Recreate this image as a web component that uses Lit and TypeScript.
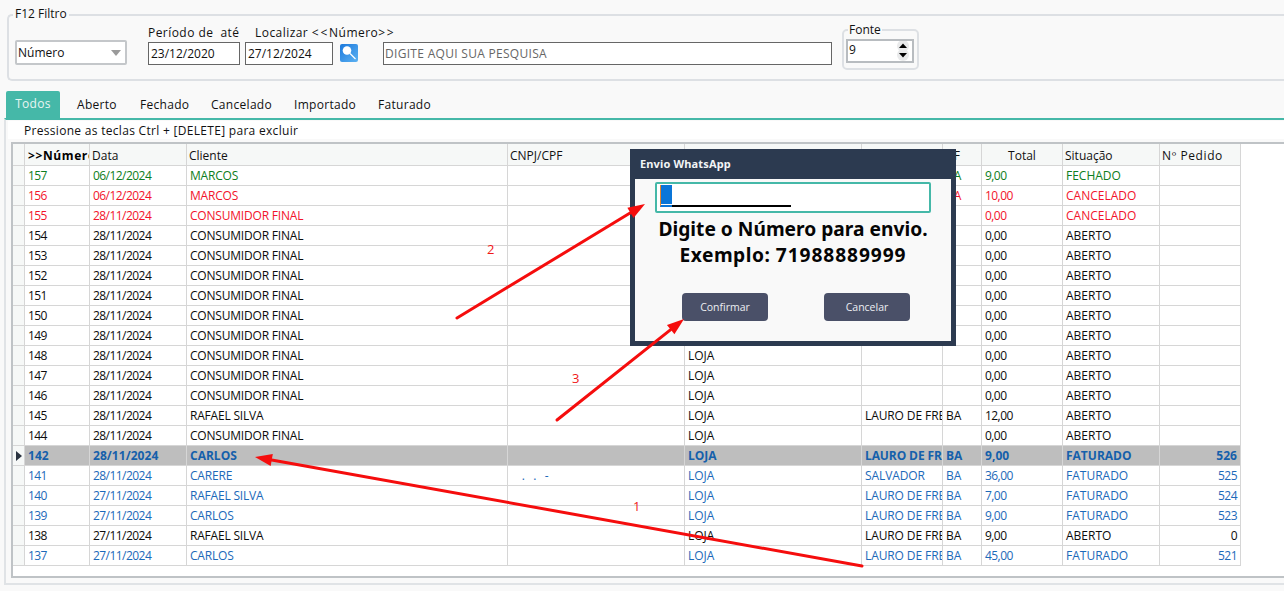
import { LitElement, html, css, svg } from "lit";
import { customElement } from "lit/decorators.js";

type Row = { n: string; d: string; c: string; doc?: string; city?: string; uf?: string; t: string; s: string; p?: string; k: string };

const L = "LAURO DE FREITAS";
const rows: Row[] = [
  { n: "157", d: "06/12/2024", c: "MARCOS", uf: "BA", t: "9,00", s: "FECHADO", k: "g" },
  { n: "156", d: "06/12/2024", c: "MARCOS", uf: "BA", t: "10,00", s: "CANCELADO", k: "r" },
  { n: "155", d: "28/11/2024", c: "CONSUMIDOR FINAL", t: "0,00", s: "CANCELADO", k: "r" },
  ...["154", "153", "152", "151", "150", "149", "148", "147", "146"].map((n) => ({
    n, d: "28/11/2024", c: "CONSUMIDOR FINAL", t: "0,00", s: "ABERTO", k: "k",
  })),
  { n: "145", d: "28/11/2024", c: "RAFAEL SILVA", city: L, uf: "BA", t: "12,00", s: "ABERTO", k: "k" },
  { n: "144", d: "28/11/2024", c: "CONSUMIDOR FINAL", t: "0,00", s: "ABERTO", k: "k" },
  { n: "142", d: "28/11/2024", c: "CARLOS", city: L, uf: "BA", t: "9,00", s: "FATURADO", p: "526", k: "sel" },
  { n: "141", d: "28/11/2024", c: "CARERE", doc: " .  .  -", city: "SALVADOR", uf: "BA", t: "36,00", s: "FATURADO", p: "525", k: "b" },
  { n: "140", d: "27/11/2024", c: "RAFAEL SILVA", city: L, uf: "BA", t: "7,00", s: "FATURADO", p: "524", k: "b" },
  { n: "139", d: "27/11/2024", c: "CARLOS", city: L, uf: "BA", t: "9,00", s: "FATURADO", p: "523", k: "b" },
  { n: "138", d: "27/11/2024", c: "RAFAEL SILVA", city: L, uf: "BA", t: "9,00", s: "ABERTO", p: "0", k: "k" },
  { n: "137", d: "27/11/2024", c: "CARLOS", city: L, uf: "BA", t: "45,00", s: "FATURADO", p: "521", k: "b" },
];

function arrow(x1: number, y1: number, x2: number, y2: number) {
  const a = Math.atan2(y2 - y1, x2 - x1);
  const len = 17, w = 6;
  const bx = x2 - Math.cos(a) * len, by = y2 - Math.sin(a) * len;
  const px = -Math.sin(a) * w, py = Math.cos(a) * w;
  return svg`<line x1=${x1} y1=${y1} x2=${bx} y2=${by} stroke="#f50d0d" stroke-width="3" stroke-linecap="round"></line>
    <polygon points="${x2},${y2} ${bx + px},${by + py} ${bx - px},${by - py}" fill="#f50d0d"></polygon>`;
}

@customElement("app-root")
export class AppRoot extends LitElement {
  static styles = css`
    :host {
      display: block; position: relative; width: 1284px; height: 591px; overflow: hidden;
      background: #f9f9f9; color: #111; font: 12px/16px "Open Sans", "Noto Sans", sans-serif;
    }
    .filter {
      position: relative; box-sizing: border-box; display: flex; height: 67px; margin: 14px 0 0 7px;
      padding: 8px 0 0 6px; border: 2px solid #dde0e4; border-right: none; border-radius: 5px 0 0 5px;
    }
    .legend { position: absolute; left: 4px; top: -10px; padding: 0 2px; background: #f9f9f9; }
    .select {
      box-sizing: border-box; display: flex; align-items: center; justify-content: space-between;
      width: 112px; height: 25px; margin: 16px 21px 0 0; padding: 0 4px 0 1px;
      border: 2px solid #c4c7ca; border-radius: 2px; background: #fff;
    }
    .tri { width: 0; height: 0; border: 5.5px solid transparent; border-top: 6px solid #9a9a9a; border-bottom: 0; }
    .labels { display: flex; height: 18px; align-items: center; letter-spacing: 0.45px; }
    .labels span:first-child { width: 107px; flex: none; white-space: pre; }
    .wide { letter-spacing: 1.8px; }
    .inputs { display: flex; align-items: flex-start; }
    .field {
      box-sizing: border-box; height: 23px; border: 1px solid #666; background: #fff;
      padding: 0 2px; line-height: 21px; white-space: nowrap; flex: none;
    }
    .d1 { width: 92px; margin-right: 5px; }
    .d2 { width: 88px; margin-right: 7px; }
    .search { width: 449px; margin-left: 25px; padding-left: 1px; color: #666; letter-spacing: 0.3px; }
    .lupa { display: block; flex: none; margin-top: 2px; }
    .fonte {
      position: relative; box-sizing: border-box; width: 77px; height: 41px; margin: 5px 0 0 10px;
      padding: 8px 3px 0 2px; border: 2px solid #dde0e4; border-radius: 5px;
    }
    .fonte-label { position: absolute; left: 4px; top: -9px; padding: 0 1px; background: #f9f9f9; line-height: 15px; color: #111; }
    .spin {
      box-sizing: border-box; display: flex; justify-content: space-between; height: 24px; padding: 0 2px 0 1px;
      border: 2px solid #b8bcc0; background: #fff; line-height: 18px;
    }
    .spin-btn { display: block; }

    .tabs { display: flex; height: 27px; margin: 10px 0 0 6px; align-items: center; letter-spacing: 0.3px; }
    .tab { height: 27px; line-height: 27px; flex: none; }
    .tab.on { width: 54px; text-align: center; background: #45b8a8; color: #e8f5f2; border-radius: 2px 2px 0 0; line-height: 25px; }
    .panel {
      box-sizing: border-box; height: 467px; margin-left: 4px; border-top: 2px solid #45b8a8;
      border-left: 2px solid #e0e3e6; border-bottom: 2px solid #e0e3e6;
    }
    .note { height: 18px; margin: 1px 0 0 2px; padding-left: 16px; background: #fff; line-height: 20px; letter-spacing: 0.3px; }
    .grid {
      box-sizing: border-box; height: 436px; margin: 3px 0 0 5px; background: #fff;
      border-top: 2px solid #bfc3c6; border-left: 2px solid #bfc3c6; border-bottom: 2px solid #bfc3c6;
    }
    .row { display: flex; height: 20px; }
    .row.head { height: 22px; background: #f6f8f7; width: 1228px; }
    .cell {
      box-sizing: border-box; flex: none; overflow: hidden; white-space: pre; padding: 0 0 0 3px;
      border-right: 1px solid #d6d6d6; border-bottom: 1px solid #d6d6d6; line-height: 19px;
    }
    .head .cell { line-height: 24px; padding-left: 2px; color: #111; }
    .head .cell.num { padding-left: 3px; font-weight: 700; color: #000; letter-spacing: 0.6px; }
    .head .cell.tot { text-align: center; padding-left: 0; }
    .head .cell.ped { letter-spacing: 0.6px; }
    .cell.ind { background: #f6f8f7; padding: 0; display: flex; align-items: center; justify-content: center; }
    .cell.right { text-align: right; padding: 0 3px 0 0; }
    .cell.w12 { width: 12px; } .cell.w65 { width: 65px; } .cell.w97 { width: 97px; } .cell.w321 { width: 321px; }
    .cell.w177 { width: 177px; } .cell.w81 { width: 81px; } .cell.w39 { width: 39px; }
    .cell.tight { letter-spacing: -0.55px; }
    .cell.name { letter-spacing: -0.2px; }
    .cell.city { letter-spacing: -0.1px; }
    .sel .cell.tight { letter-spacing: 0.05px; }
    .sel .cell.name { letter-spacing: 0; }
    .doc { padding-left: 10px; letter-spacing: 0.7px; }
    .g { color: #0d7d20; } .r { color: #f2132b; } .k { color: #0c0c0c; } .b { color: #1c69b9; }
    .sel { color: #1560ab; font-weight: 700; }
    .sel .cell:not(.ind) { background: #bebebe; }
    .tri-r { width: 0; height: 0; border: 5px solid transparent; border-left: 6px solid #2a3340; border-right: 0; }

    .dialog {
      position: absolute; left: 630px; top: 149px; box-sizing: border-box; width: 326px; height: 197px;
      border: 5px solid #2c3a50; border-top: none; background: #f9f9f9;
    }
    .dlg-title {
      height: 30px; margin: 0 -5px; padding-left: 10px; background: #2c3a50; color: #f2f4f6;
      font: 700 11px/29px "Noto Sans", sans-serif; letter-spacing: 0.15px;
    }
    .dlg-body { padding: 3px 20px 0; text-align: center; }
    .mask {
      box-sizing: border-box; display: flex; align-items: flex-end; height: 31px; padding: 0 0 4px 3px;
      border: 2px solid #45b8a8; border-radius: 2px; background: #fff;
    }
    .caret { box-sizing: border-box; width: 12px; height: 22px; background: #0a76d8; border-left: 1px solid #e8862a; border-bottom: 2px solid #0a76d8; box-shadow: inset 0 -1px 0 #fff; flex: none; }
    .line { width: 119px; height: 2px; background: #000; flex: none; }
    .msg { margin: 3px -20px 0; font: 700 19.2px/26px "Noto Sans", sans-serif; color: #050505; white-space: nowrap; }
    .ex { letter-spacing: 0.5px; }
    .num { letter-spacing: 0.9px; }
    .buttons { display: flex; gap: 56px; margin: 25px 0 0 27px; }
    .btn {
      width: 86px; height: 28px; border-radius: 4px; background: #4a5068; color: #eceef2;
      font-size: 10.5px; line-height: 28px; text-align: center;
    }
    .over { position: absolute; left: 0; top: 0; pointer-events: none; }
    .mark { position: absolute; color: #f01818; font-size: 13px; line-height: 16px; }
    .m2 { left: 487px; top: 241px; } .m3 { left: 572px; top: 370px; } .m1 { left: 633px; top: 498px; }
  `;

  render() {
    return html`
      <div class="filter">
        <span class="legend">F12 Filtro</span>
        <div class="select"><span>Número</span><i class="tri"></i></div>
        <div>
          <div class="labels"><span>Período de  até</span><span>Localizar <span class="wide">&lt;&lt;</span>Número<span class="wide">&gt;&gt;</span></span></div>
          <div class="inputs">
            <div class="field d1">23/12/2020</div>
            <div class="field d2">27/12/2024</div>
            <svg class="lupa" width="18" height="18" viewBox="0 0 18 18">
              <defs><linearGradient id="lg" x1="0" y1="0" x2="1" y2="1"><stop offset="0" stop-color="#1b78dc"></stop><stop offset="1" stop-color="#5db2f2"></stop></linearGradient></defs>
              <rect width="18" height="18" rx="2" fill="url(#lg)"></rect>
              <circle cx="7" cy="6.5" r="4.3" fill="#fff"></circle>
              <line x1="10" y1="9.5" x2="15.5" y2="15" stroke="#fff" stroke-width="1.3"></line>
            </svg>
            <div class="field search">DIGITE AQUI SUA PESQUISA</div>
          </div>
        </div>
        <div class="fonte">
          <span class="fonte-label">Fonte</span>
          <div class="spin">
            <span>9</span>
            <svg class="spin-btn" width="14" height="20" viewBox="0 0 14 20">
              <circle cx="7" cy="5" r="6" fill="#e9eaeb"></circle>
              <circle cx="7" cy="14" r="6" fill="#e9eaeb"></circle>
              <path d="M3 7 L7 2.5 L11 7 Z" fill="#000"></path>
              <path d="M3 12 L11 12 L7 16.5 Z" fill="#000"></path>
            </svg>
          </div>
        </div>
      </div>

      <div class="tabs">
        <div class="tab on" style="margin-right:17px">Todos</div>
        ${[["Aberto", 63], ["Fechado", 71], ["Cancelado", 83], ["Importado", 84], ["Faturado", 60]].map(
          ([t, w]) => html`<div class="tab" style="width:${w}px">${t}</div>`
        )}
      </div>

      <div class="panel">
        <div class="note">Pressione as teclas Ctrl + [DELETE] para excluir</div>
        <div class="grid">
          <div class="row head">
            <div class="cell ind w12"></div>
            <div class="cell num w65">&gt;&gt;Número</div>
            <div class="cell w97">Data</div>
            <div class="cell w321">Cliente</div>
            <div class="cell w177">CNPJ/CPF</div>
            <div class="cell w177">Loja</div>
            <div class="cell w81">Cidade</div>
            <div class="cell w39">UF</div>
            <div class="cell tot w81">Total</div>
            <div class="cell w97">Situação</div>
            <div class="cell ped w81">Nº Pedido</div>
          </div>
          ${rows.map(
            (r) => html`<div class="row ${r.k}">
              <div class="cell ind w12">${r.k === "sel" ? html`<i class="tri-r"></i>` : ""}</div>
              <div class="cell tight w65">${r.n}</div>
              <div class="cell tight w97">${r.d}</div>
              <div class="cell name w321">${r.c}</div>
              <div class="cell w177 ${r.doc ? "doc" : ""}">${r.doc ?? ""}</div>
              <div class="cell w177">LOJA</div>
              <div class="cell city w81">${r.city ?? ""}</div>
              <div class="cell w39">${r.uf ?? ""}</div>
              <div class="cell tight w81">${r.t}</div>
              <div class="cell w97">${r.s}</div>
              <div class="cell tight w81 right">${r.p ?? ""}</div>
            </div>`
          )}
        </div>
      </div>

      <div class="dialog">
        <div class="dlg-title">Envio WhatsApp</div>
        <div class="dlg-body">
          <div class="mask"><i class="caret"></i><i class="line"></i></div>
          <div class="msg">Digite o Número para envio.<br /><span class="ex">Exemplo: </span><span class="num">71988889999</span></div>
          <div class="buttons"><div class="btn">Confirmar</div><div class="btn">Cancelar</div></div>
        </div>
      </div>

      <svg class="over" width="1284" height="591">
        ${arrow(457, 318, 645, 204)}
        ${arrow(557, 420, 684, 319)}
        ${arrow(862, 566, 255, 457)}
      </svg>
      <span class="mark m2">2</span>
      <span class="mark m3">3</span>
      <span class="mark m1">1</span>
    `;
  }
}
